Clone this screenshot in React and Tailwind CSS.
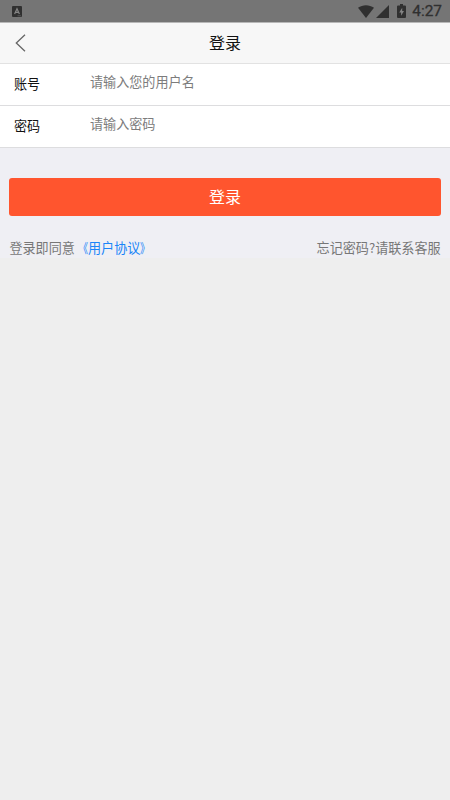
import React, { useState } from "react";

function StatusBar() {
  return (
    <div className="h-[22px] bg-[#757575] flex items-center justify-between pl-3 pr-2 text-[#303030]">
      <svg width="10" height="11" viewBox="0 0 10 11" className="mt-px">
        <rect width="10" height="11" rx="1" fill="currentColor" />
        <path
          d="M2.6 8 5 2.8 7.4 8M3.5 6.3h3"
          fill="none"
          stroke="#858585"
          strokeWidth="1.2"
        />
        <path d="M5.5 9.8H9" stroke="#707070" strokeWidth="0.6" />
      </svg>
      <div className="flex items-center">
        <svg width="16" height="13" viewBox="0 0 16 13" fill="currentColor">
          <path d="M0 2.8C4.6-.6 11.4-.6 16 2.8L8 13z" />
        </svg>
        <svg
          width="13"
          height="13"
          viewBox="0 0 13 13"
          fill="currentColor"
          className="ml-0.5"
        >
          <path d="M13 0v13H0z" />
        </svg>
        <svg
          width="9"
          height="14"
          viewBox="0 0 9 14"
          fill="currentColor"
          className="ml-2"
        >
          <path d="M3 0h3v1.5h2q1 0 1 1V13q0 1-1 1H1q-1 0-1-1V2.5q0-1 1-1h2z" />
          <path
            d="M5.2 3.8 2.2 8.4h1.9v3.3L7 7.1H5.2z"
            fill="#858585"
          />
        </svg>
        <span className="ml-1.5 pt-px font-[Roboto] text-[15.4px] leading-[21px] [-webkit-text-stroke:0.3px]">
          4:27
        </span>
      </div>
    </div>
  );
}

function Field({ id, label, type, placeholder, value, onChange }) {
  return (
    <div className="h-[42px] flex items-center border-b border-[#dddddf] bg-white pl-3.5">
      <label
        htmlFor={id}
        className="w-[76px] pb-0.5 text-[13.1px] text-[#111111]"
      >
        {label}
      </label>
      <input
        id={id}
        type={type}
        value={value}
        onChange={(e) => onChange(e.target.value)}
        placeholder={placeholder}
        className="flex-1 h-9 mb-1.5 text-[13.1px] outline-none placeholder:text-[#7c7c7c]"
      />
    </div>
  );
}

function App() {
  const [account, setAccount] = useState("");
  const [password, setPassword] = useState("");

  return (
    <div className="min-h-screen bg-[#eeeeee] font-['Noto_Sans_CJK_SC',sans-serif]">
      <StatusBar />
      <header className="h-[42px] grid grid-cols-[1fr_auto_1fr] items-center bg-[#f7f7f7] border-t border-t-[#b8b8b8] border-b border-b-[#e2e2e2]">
        <button type="button" className="pl-[15px]" aria-label="返回">
          <svg
            width="11"
            height="18"
            viewBox="0 0 11 18"
            fill="none"
            stroke="#666666"
            strokeWidth="1.3"
          >
            <path d="M10 .7 1.3 9 10 17.3" />
          </svg>
        </button>
        <h1 className="pb-0.5 text-base text-[#111111]">登录</h1>
      </header>

      <form
        onSubmit={(e) => e.preventDefault()}
        className="h-[194px] bg-[#efeff4]"
      >
        <Field
          id="account"
          label="账号"
          type="text"
          placeholder="请输入您的用户名"
          value={account}
          onChange={setAccount}
        />
        <Field
          id="password"
          label="密码"
          type="password"
          placeholder="请输入密码"
          value={password}
          onChange={setPassword}
        />
        <div className="px-[9.4px] pt-[30px]">
          <button
            type="submit"
            className="block w-full h-[38px] pb-0.5 rounded-[3px] bg-[#ff552e] text-base text-white"
          >
            登录
          </button>
          <div className="mt-[22px] flex justify-between text-[13.1px] leading-5 text-[#777777]">
            <p>
              登录即同意
              <a className="text-[#1a85f8]">
                {/* narrow the wide book-title marks */}
                <span className="inline-block origin-right scale-x-75">《</span>
                用户协议
                <span className="inline-block origin-left scale-x-75">》</span>
              </a>
            </p>
            <p>忘记密码?请联系客服</p>
          </div>
        </div>
      </form>
    </div>
  );
}

export default App;
